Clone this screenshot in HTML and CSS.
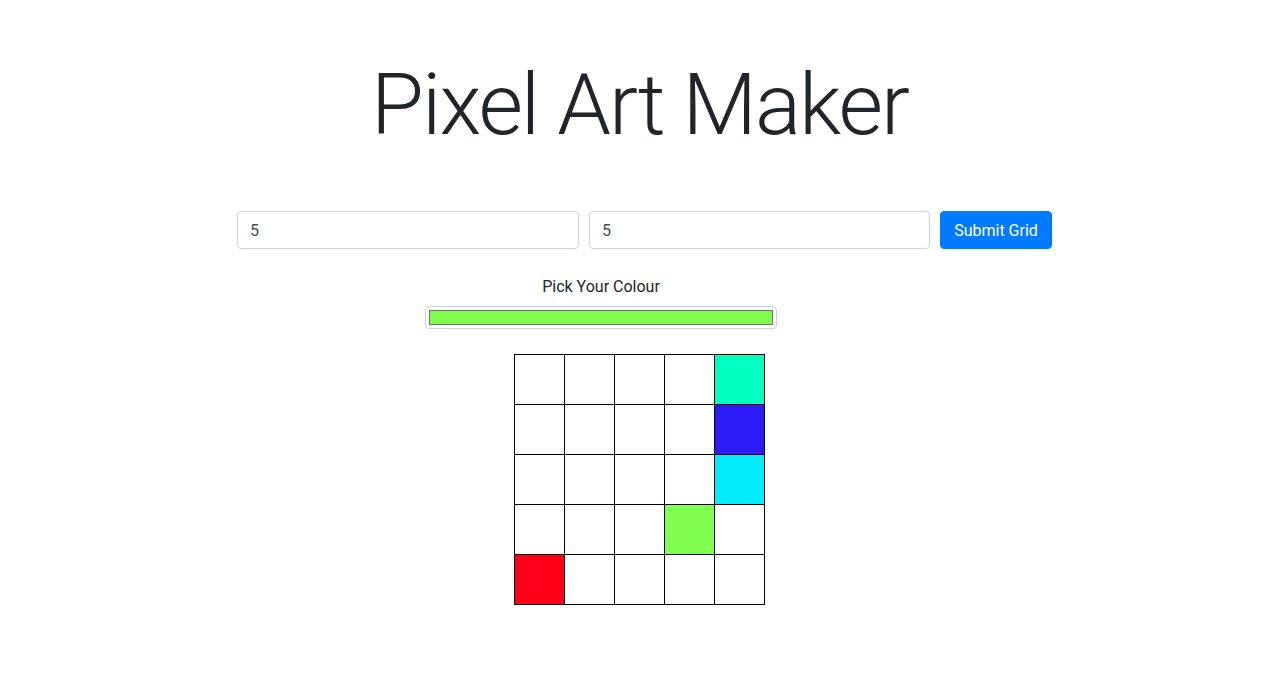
FILE: index.html
```html
<!DOCTYPE html>
<html>
<head>
<meta charset="utf-8">
<link rel="stylesheet" href="styles.css">
</head>
<body>
<div class="page">
  <h1 class="title">Pixel Art Maker</h1>
  <form class="size-form">
    <input class="field" type="text" value="5">
    <input class="field" type="text" value="5">
    <button class="btn" type="button">Submit Grid</button>
  </form>
  <div class="picker">
    <div class="picker-label">Pick Your Colour</div>
    <div class="color-box"><div class="color-swatch"></div></div>
  </div>
  <table class="canvas">
    <tr><td></td><td></td><td></td><td></td><td class="c-teal"></td></tr>
    <tr><td></td><td></td><td></td><td></td><td class="c-blue"></td></tr>
    <tr><td></td><td></td><td></td><td></td><td class="c-cyan"></td></tr>
    <tr><td></td><td></td><td></td><td class="c-green"></td><td></td></tr>
    <tr><td class="c-red"></td><td></td><td></td><td></td><td></td></tr>
  </table>
</div>
</body>
</html>
```
FILE: styles.css
```css
html, body {
  margin: 0;
  padding: 0;
  background: #fff;
}
body {
  font-family: Roboto, "Liberation Sans", sans-serif;
  color: #212529;
  font-size: 16px;
}
.page {
  display: flex;
  flex-direction: column;
  align-items: center;
  padding-top: 53px;
}
.title {
  margin: 0;
  font-weight: 300;
  font-size: 86px;
  letter-spacing: -2px;
  line-height: 1.2;
  color: #212529;
}
.size-form {
  display: flex;
  gap: 10px;
  margin-top: 55px;
  padding-left: 10px;
}
.field {
  box-sizing: border-box;
  width: 342px;
  height: 38px;
  padding: 6px 12px;
  border: 1px solid #ced4da;
  border-radius: 4px;
  font-family: Roboto, "Liberation Sans", sans-serif;
  font-size: 16px;
  color: #495057;
  background: #fff;
}
.field + .field { width: 341px; }
.btn {
  box-sizing: border-box;
  height: 38px;
  width: 112px;
  border: 1px solid #007bff;
  border-radius: 4px;
  background: #007bff;
  color: #fff;
  font-family: Roboto, "Liberation Sans", sans-serif;
  font-size: 16px;
  font-weight: 400;
  padding: 0 12px;
}
.picker {
  display: flex;
  flex-direction: column;
  align-items: center;
  margin-top: 26px;
  margin-right: 77px;
}
.picker-label {
  line-height: 24px;
}
.color-box {
  box-sizing: border-box;
  margin-top: 7px;
  width: 352px;
  height: 23px;
  border: 1px solid #ced4da;
  border-radius: 4px;
  padding: 3px;
  background: #fff;
}
.color-swatch {
  box-sizing: border-box;
  height: 15px;
  background: #80fc4e;
  border: 1px solid #707070;
}
.canvas {
  border-collapse: collapse;
  margin-top: 25px;
}
.canvas td {
  width: 50px;
  height: 50px;
  padding: 0;
  border: 1px solid #000;
  box-sizing: border-box;
}
.c-teal { background: #00ffc0; }
.c-blue { background: #2e1af5; }
.c-cyan { background: #00eeff; }
.c-green { background: #80ff50; }
.c-red { background: #ff0019; }
```
